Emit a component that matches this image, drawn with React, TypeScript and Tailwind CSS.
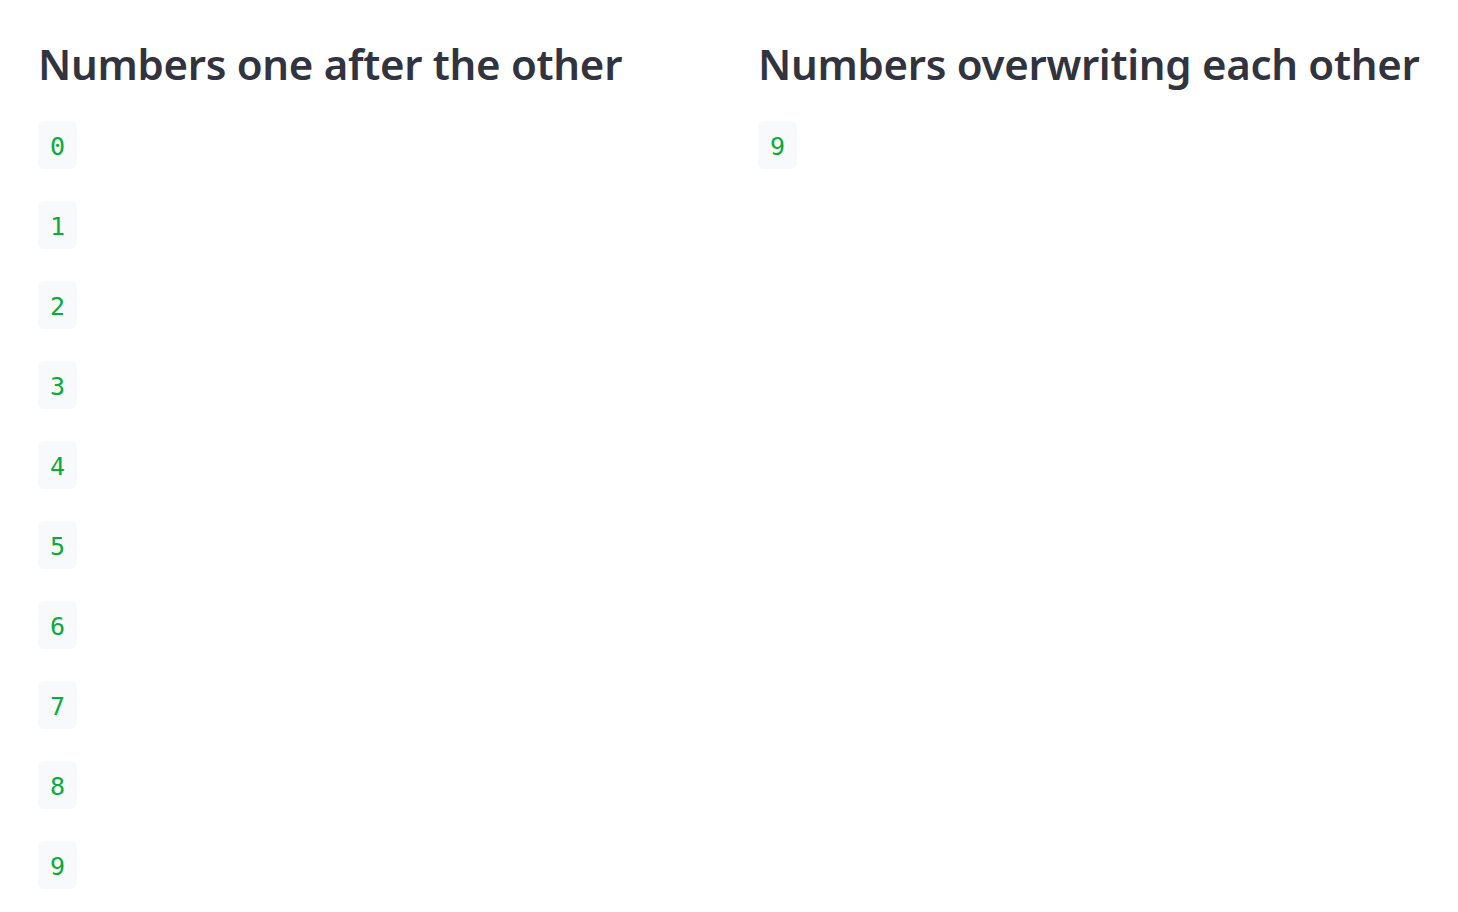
const NUMBERS = [0, 1, 2, 3, 4, 5, 6, 7, 8, 9];

function Code({ value }: { value: number }) {
  return (
    <div className="flex h-[48px] w-[39px] items-center justify-center rounded-[6px] bg-[#f8f9fb] pt-[3px] font-['DejaVu_Sans_Mono',monospace] text-[25px] text-[#09ab3b]">
      {value}
    </div>
  );
}

export default function App() {
  return (
    <div className="min-h-screen bg-white pl-[38px] pt-[36px] font-['Noto_Sans',sans-serif]">
      <div className="grid grid-cols-[720px_680px]">
        <div>
          <h2 className="mb-[29px] text-[42px] leading-[56px] font-semibold tracking-[-0.3px] text-[#31333f]">
            Numbers one after the other
          </h2>
          <div className="flex flex-col gap-[32px]">
            {NUMBERS.map((n) => (
              <Code key={n} value={n} />
            ))}
          </div>
        </div>
        <div>
          <h2 className="mb-[29px] text-[42px] leading-[56px] font-semibold tracking-[-0.3px] text-[#31333f]">
            Numbers overwriting each other
          </h2>
          <Code value={9} />
        </div>
      </div>
    </div>
  );
}
